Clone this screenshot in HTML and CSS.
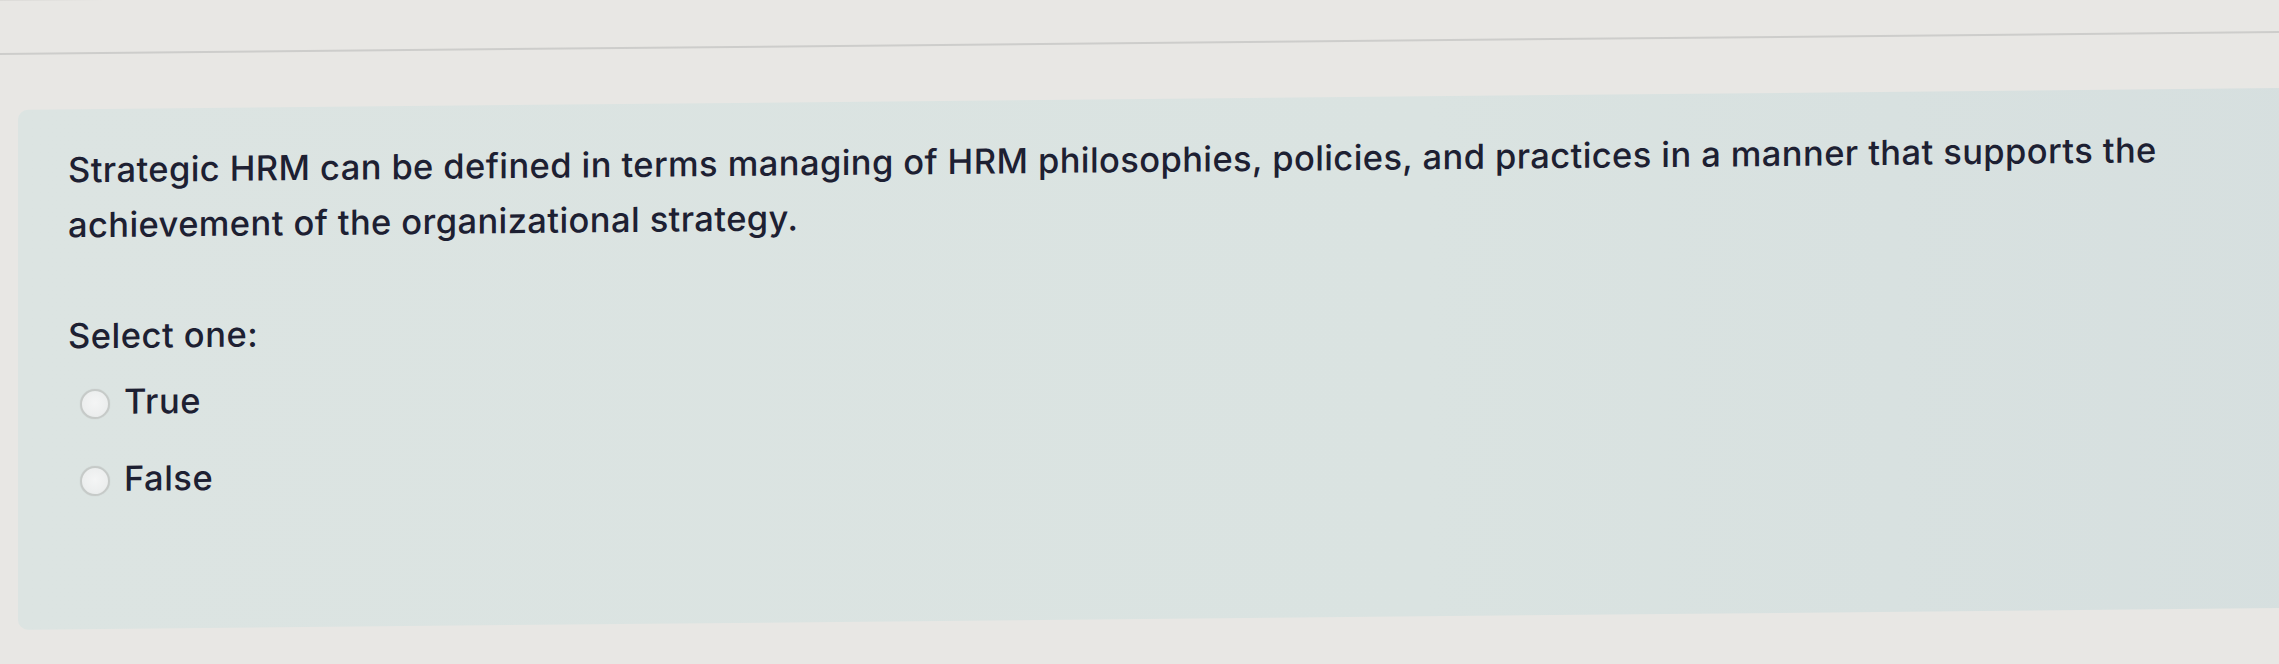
FILE: index.html
```html
<!DOCTYPE html>
<html lang="en">
<head>
<meta charset="utf-8">
<title>Question</title>
<link rel="stylesheet" href="styles.css">
</head>
<body>
<div class="screen">
  <div class="topbar"></div>
  <div class="panel">
    <div class="qtext">Strategic HRM can be defined in terms managing of HRM philosophies, policies, and practices in a manner that supports the achievement of the organizational strategy.</div>
    <div class="prompt">Select one:</div>
    <div class="answers">
      <label class="option"><span class="radio"></span><span class="label">True</span></label>
      <label class="option"><span class="radio"></span><span class="label">False</span></label>
    </div>
  </div>
</div>
</body>
</html>
```
FILE: styles.css
```css
html, body {
  margin: 0;
  padding: 0;
  height: 100%;
  overflow: hidden;
  background: #e8e7e4;
}
body {
  font-family: Inter, "Liberation Sans", sans-serif;
  font-weight: 500;
  color: #1d2032;
}
.screen {
  width: 2360px;
  transform: skewY(-0.55deg);
  transform-origin: 0 0;
}
.topbar {
  height: 52px;
  border-top: 1px solid #dcdbd8;
  border-bottom: 2px solid #cdcdcb;
}
.panel {
  margin: 55px 0 0 18px;
  height: 520px;
  box-sizing: border-box;
  padding: 33px 0 0 50px;
  background: linear-gradient(90deg, #dce4e2 0%, #dae3e1 60%, #d6dfdf 100%);
  border-radius: 10px 0 0 10px;
}
.qtext {
  font-size: 34.5px;
  letter-spacing: 0.4px;
  line-height: 55px;
  max-width: 2190px;
}
.prompt {
  margin-top: 56px;
  font-size: 34.5px;
  letter-spacing: 0.5px;
  line-height: 55px;
}
.answers {
  display: flex;
  flex-direction: column;
  gap: 22px;
  margin-top: 11px;
}
.option {
  display: flex;
  align-items: center;
  height: 55px;
  font-size: 34.5px;
  letter-spacing: 0.5px;
}
.radio {
  width: 30px;
  height: 30px;
  box-sizing: border-box;
  margin: 4px 14px 0 12px;
  border-radius: 50%;
  border: 2px solid #c6cac8;
  background: radial-gradient(circle at 50% 45%, #f4f5f5 0%, #eceeee 65%, #dfe2e1 100%);
  box-shadow: 0 0 1px rgba(0, 0, 0, 0.15);
  flex: none;
}
```
